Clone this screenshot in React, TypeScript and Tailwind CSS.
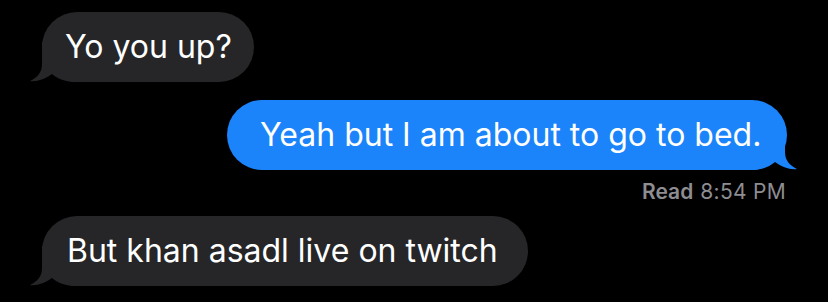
export default function App() {
  return (
    <main className="w-[828px] h-[302px] bg-black overflow-hidden flex flex-col pt-[12px] font-['Inter',sans-serif]">
      <div className="flex pl-[42px]">
        <Bubble side="left" className="w-[212px] pl-[23px]">
          Yo you up?
        </Bubble>
      </div>

      <div className="flex justify-end pr-[41px] mt-[18px]">
        <Bubble side="right" className="w-[560px] pl-[33px]">
          Yeah but I am about to go to bed.
        </Bubble>
      </div>

      <div className="flex justify-end pr-[42px] mt-[10px] text-[21px] leading-[24px] text-[#8d8d92]">
        <span className="font-semibold">Read</span>
        <span className="ml-[7px] tracking-[0.3px]">8:54 PM</span>
      </div>

      <div className="flex pl-[42px] mt-[12px]">
        <Bubble side="left" className="w-[486px] pl-[25px]">
          But khan asadl live on twitch
        </Bubble>
      </div>
    </main>
  );
}

function Bubble({
  side,
  className,
  children,
}: {
  side: "left" | "right";
  className: string;
  children: React.ReactNode;
}) {
  const blue = side === "right";
  return (
    <div
      className={`relative h-[70px] flex items-center rounded-[35px] text-white text-[32px] leading-[38px] whitespace-nowrap ${
        blue ? "bg-[#1b84fb]" : "bg-[#262628]"
      } ${className}`}
    >
      <Tail side={side} color={blue ? "#1b84fb" : "#262628"} />
      <span className="relative">{children}</span>
    </div>
  );
}

function Tail({ side, color }: { side: "left" | "right"; color: string }) {
  return (
    <svg
      width="50"
      height="40"
      viewBox="0 0 50 40"
      className={`absolute bottom-0 ${side === "left" ? "left-[-12px]" : "right-[-10px] scale-x-[-1]"}`}
    >
      <path
        d="M12 0 L12 22 C12 30 8 35 0 39 C7 40 15 37 22 32 C28 37 34 39 42 40 L50 40 L50 0 Z"
        fill={color}
      />
    </svg>
  );
}
